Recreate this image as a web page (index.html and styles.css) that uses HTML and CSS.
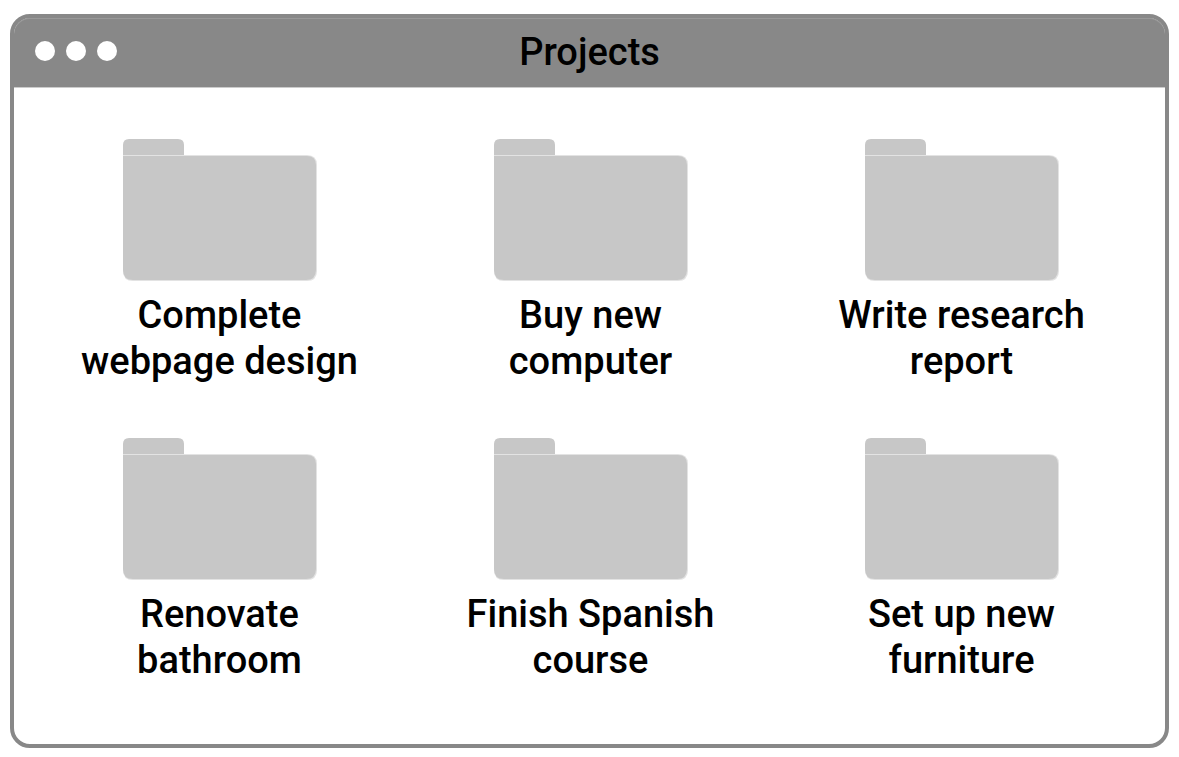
FILE: index.html
```html
<!DOCTYPE html>
<html lang="en">
<head>
<meta charset="utf-8">
<title>Projects</title>
<link rel="stylesheet" href="styles.css">
</head>
<body>
<svg class="defs" aria-hidden="true">
  <symbol id="folder" viewBox="0 0 194 142">
    <path fill="#c7c7c7" d="M0 16V6Q0 0 6 0H55Q61 0 61 6V16Z"/>
    <path fill="#e3e3e3" d="M0 16H184Q194 16 194 26V132Q194 142 184 142H10Q0 142 0 132Z"/>
    <path fill="#c7c7c7" d="M0 17H184Q193 17 193 26V131Q193 141 183 141H10Q0 141 0 131Z"/>
  </symbol>
</svg>
<main class="window">
  <header class="titlebar">
    <div class="controls">
      <button class="dot" type="button" aria-label="Close"></button>
      <button class="dot" type="button" aria-label="Minimize"></button>
      <button class="dot" type="button" aria-label="Zoom"></button>
    </div>
    <h1 class="title">Projects</h1>
  </header>
  <div class="folders">
    <a class="folder" href="#"><svg class="icon" aria-hidden="true"><use href="#folder"/></svg><span>Complete<br>webpage design</span></a>
    <a class="folder" href="#"><svg class="icon" aria-hidden="true"><use href="#folder"/></svg><span>Buy new<br>computer</span></a>
    <a class="folder" href="#"><svg class="icon" aria-hidden="true"><use href="#folder"/></svg><span>Write research<br>report</span></a>
    <a class="folder" href="#"><svg class="icon" aria-hidden="true"><use href="#folder"/></svg><span>Renovate<br>bathroom</span></a>
    <a class="folder" href="#"><svg class="icon" aria-hidden="true"><use href="#folder"/></svg><span>Finish Spanish<br>course</span></a>
    <a class="folder" href="#"><svg class="icon" aria-hidden="true"><use href="#folder"/></svg><span>Set up new<br>furniture</span></a>
  </div>
</main>
</body>
</html>
```
FILE: styles.css
```css
* {
  box-sizing: border-box;
}

body {
  margin: 0;
  padding: 14px 10px 9px;
  background: #fff;
  color: #000;
  font: 500 38px/46px Roboto, sans-serif;
}

.defs {
  position: absolute;
  width: 0;
  height: 0;
}

.window {
  border: 4px solid #888;
  border-radius: 20px;
}

.titlebar {
  display: grid;
  grid-template-columns: 1fr auto 1fr;
  align-items: center;
  padding: 11px 21px 12px;
  background: #888;
  border-bottom: 1px solid #ccc;
  border-radius: 16px 16px 0 0;
  box-shadow: inset 0 1px #999;
}

.controls {
  display: flex;
  gap: 11px;
  padding-bottom: 2px;
}

.dot {
  width: 20px;
  height: 20px;
  padding: 0;
  border: 0;
  border-radius: 50%;
  background: #fff;
}

.title {
  margin: 0;
  font: inherit;
}

.folders {
  display: grid;
  grid-template-columns: repeat(3, 1fr);
  row-gap: 54px;
  padding: 51px 18px 61px 20px;
}

.folder {
  display: flex;
  flex-direction: column;
  align-items: center;
  gap: 11px;
  color: inherit;
  text-align: center;
  text-decoration: none;
}

.icon {
  width: 194px;
  height: 142px;
}
```
